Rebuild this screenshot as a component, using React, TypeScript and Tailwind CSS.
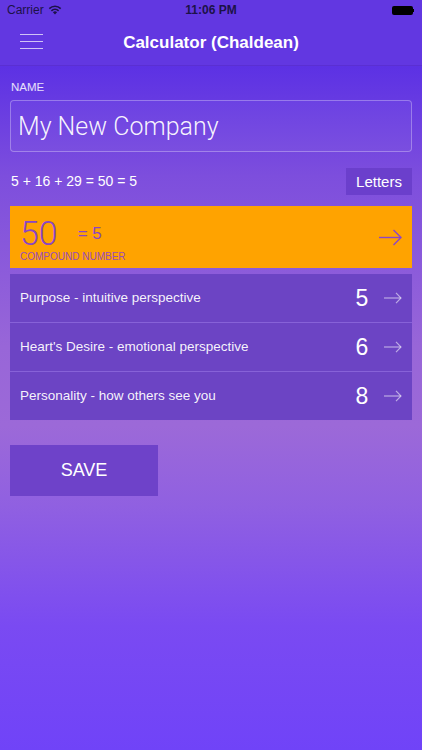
const rows = [
  { label: 'Purpose - intuitive perspective', value: 5 },
  { label: "Heart's Desire - emotional perspective", value: 6 },
  { label: 'Personality - how others see you', value: 8 },
]

function Wifi() {
  return (
    <svg width="14" height="10" viewBox="0 0 14 10" className="ml-1">
      <path d="M7 9.6 L4.9 7.3 A3 3 0 0 1 9.1 7.3 Z" fill="#1c1248" />
      <path d="M3.4 5.8 A5.2 5.2 0 0 1 10.6 5.8" stroke="#1c1248" strokeWidth="1.6" fill="none" />
      <path d="M1.3 3.6 A8.2 8.2 0 0 1 12.7 3.6" stroke="#1c1248" strokeWidth="1.6" fill="none" />
    </svg>
  )
}

function Battery() {
  return (
    <div className="flex items-center">
      <div className="w-[21px] h-[9px] rounded-[2px] bg-black" />
      <div className="w-[1.5px] h-[3px] bg-black" />
    </div>
  )
}

function BigArrow() {
  return (
    <svg width="23" height="17" viewBox="0 0 23 17" fill="none" stroke="#8c46c6" strokeWidth="1.4">
      <path d="M0 8.5 H22" />
      <path d="M14.5 1 L22 8.5 L14.5 16" />
    </svg>
  )
}

function SmallArrow() {
  return (
    <svg width="18" height="12" viewBox="0 0 18 12" fill="none" stroke="rgba(255,255,255,0.55)" strokeWidth="1.2">
      <path d="M0 6 H17" />
      <path d="M12 0.8 L17 6 L12 11.2" />
    </svg>
  )
}

export default function App() {
  return (
    <div
      className="w-[422px] h-[750px] overflow-hidden text-white"
      style={{ fontFamily: '"Liberation Sans", Arial, sans-serif' }}
    >
      <div className="bg-[#6237e1] border-b border-[#5a2fd2]">
        {/* status bar */}
        <div className="h-5 flex items-center justify-between px-[7px] text-[#1c1248] text-[12px]">
          <div className="flex items-center w-[100px]">
            <span>Carrier</span>
            <Wifi />
          </div>
          <span className="font-bold">11:06 PM</span>
          <div className="w-[100px] flex justify-end pr-[1px]">
            <Battery />
          </div>
        </div>
        {/* nav bar */}
        <div className="h-[45px] relative flex items-center justify-center">
          <div className="absolute left-5 top-[14px] flex flex-col gap-[6px]">
            <div className="w-[23px] h-[1px] bg-white/70" />
            <div className="w-[23px] h-[1px] bg-white/70" />
            <div className="w-[23px] h-[1px] bg-white/70" />
          </div>
          <span className="text-[17px] font-bold">Calculator (Chaldean)</span>
        </div>
      </div>

      <div className="h-[685px] px-[10px] bg-[linear-gradient(to_bottom,#5c31e4_0px,#7d4edd_110px,#9866d8_280px,#9c69d8_360px,#9060e1_440px,#7a4af2_560px,#7043f8_685px)]">
        <div className="pt-[13px] text-[11.5px] text-white/85 pl-px">NAME</div>
        <div className="mt-[4px] h-[52px] rounded-[4px] border border-white/30 bg-white/[0.04] flex items-center px-[7px]">
          <span className="text-[25px] text-white/95" style={{ fontFamily: 'Roboto, sans-serif', fontWeight: 300 }}>
            My New Company
          </span>
        </div>

        <div className="mt-[16px] flex items-center justify-between">
          <span className="text-[14px] pl-px">5 + 16 + 29 = 50 = 5</span>
          <div className="w-[66px] h-[27px] bg-[#6b3fcc] flex items-center justify-center text-[15px]">
            Letters
          </div>
        </div>

        <div className="mt-[11px] h-[62px] bg-[#ffa300] flex items-center pl-[10px] pr-[10px]">
          <div className="flex-1 self-start pt-[10px]">
            <div className="flex items-start">
              <span
                className="text-[34px] leading-[34px] text-[#8a45c6]"
                style={{ fontFamily: 'Roboto, sans-serif', fontWeight: 300 }}
              >
                50
              </span>
              <span className="ml-[20px] mt-[9px] text-[17px] leading-[17px] text-[#8a45c6]">= 5</span>
            </div>
            <div className="mt-[1px] text-[10px] leading-[12px] text-[#9a4cbc]">COMPOUND NUMBER</div>
          </div>
          <BigArrow />
        </div>

        <div className="mt-[6px] bg-[#6c44c4]">
          {rows.map((r, i) => (
            <div
              key={r.label}
              className={`flex items-center pl-[10px] pr-[10px] ${i > 0 ? 'h-[49px] border-t border-[#8762d8]' : 'h-[48px]'}`}
            >
              <span className="flex-1 text-[13.5px] text-white/95">{r.label}</span>
              <span className="text-[23px] w-[20px] text-center mr-[12px]">{r.value}</span>
              <SmallArrow />
            </div>
          ))}
        </div>

        <div className="mt-[25px] w-[148px] h-[51px] bg-[#6e42c9] flex items-center justify-center text-[18px]">
          SAVE
        </div>
      </div>
    </div>
  )
}
